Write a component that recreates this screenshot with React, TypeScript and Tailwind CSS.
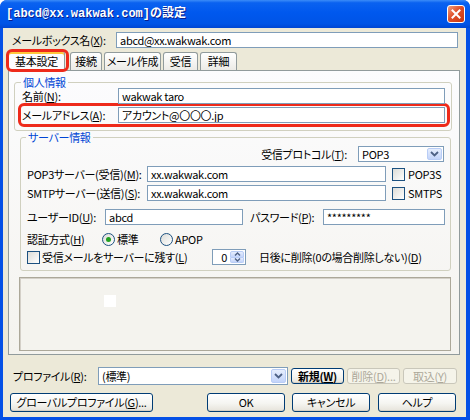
import React from "react";

type P = { children?: React.ReactNode; className?: string };

function Field({ children, className = "" }: P) {
  return (
    <div
      className={`h-[16px] shrink-0 border border-[#7F9DB9] bg-white pl-[3px] leading-[14px] whitespace-nowrap overflow-hidden ${className}`}
    >
      {children}
    </div>
  );
}

function DropArrow() {
  return (
    <div className="w-[15px] self-stretch m-px shrink-0 rounded-[2px] border border-[#B9CDF6] bg-[linear-gradient(to_bottom,#E6EEFD,#C3D4FA)] flex items-center justify-center">
      <svg width="9" height="6" viewBox="0 0 9 6">
        <path d="M1 1 L4.5 4.5 L8 1" fill="none" stroke="#4D6185" strokeWidth="1.8" />
      </svg>
    </div>
  );
}

function Combo({ children, className = "" }: P) {
  return (
    <div className={`flex shrink-0 border border-[#7F9DB9] bg-white ${className}`}>
      <span className="flex-1 flex items-center pl-[3px] whitespace-nowrap overflow-hidden">
        {children}
      </span>
      <DropArrow />
    </div>
  );
}

function Btn({
  children,
  className = "",
  disabled = false,
}: P & { disabled?: boolean }) {
  return (
    <div
      className={`flex shrink-0 items-center justify-center rounded-[3px] border whitespace-nowrap ${
        disabled
          ? "border-[#C9C7BA] bg-[#F5F4EA] text-[#ACA899]"
          : "border-[#003C74] bg-[linear-gradient(to_bottom,#FFFFFF_0%,#F5F5F1_55%,#E6E3DA_100%)] shadow-[inset_0_-1px_0_#D6D0C5]"
      } ${className}`}
    >
      {children}
    </div>
  );
}

function Check() {
  return (
    <div className="w-[13px] h-[13px] shrink-0 border border-[#1C5180] bg-[linear-gradient(135deg,#DCDCD7,#FFFFFF)]" />
  );
}

function Radio({ on = false }: { on?: boolean }) {
  return (
    <div className="w-[13px] h-[13px] shrink-0 rounded-full border border-[#1C5180] bg-[linear-gradient(135deg,#DCDCD7,#FFFFFF)] flex items-center justify-center">
      {on && <div className="w-[5px] h-[5px] rounded-full bg-[#21A121]" />}
    </div>
  );
}

function Tab({ children, className = "" }: P) {
  return (
    <div
      className={`h-[18px] mb-px shrink-0 flex items-center justify-center whitespace-nowrap rounded-t-[3px] border border-b-0 border-[#919B9C] bg-[linear-gradient(to_bottom,#FFFFFF,#ECEBE6)] ${className}`}
    >
      {children}
    </div>
  );
}

export default function App() {
  return (
    <div className="w-[470px] h-[420px] overflow-hidden bg-white font-['Liberation_Sans_Narrow','Noto_Sans_CJK_JP',sans-serif] [font-feature-settings:'palt'] text-[11px] tracking-[-0.3px] text-black">
      <div className="w-[470px] h-[420px] flex flex-col rounded-t-[7px] overflow-hidden bg-[#0450E6]">
        {/* Title bar */}
        <div className="h-[28px] shrink-0 flex items-center pl-[6px] pr-[5px] bg-[linear-gradient(to_bottom,#3B8CF8_0%,#0A62F0_10%,#0058EE_45%,#0054E6_85%,#0046D2_100%)]">
          <span className="font-['Liberation_Mono','Noto_Sans_CJK_JP',monospace] [font-feature-settings:normal] tracking-normal font-bold text-[12px] text-white [text-shadow:1px_1px_0_#0A1E8C]">
            [abcd@xx.wakwak.com]の設定
          </span>
          <div className="ml-auto w-[18px] h-[18px] rounded-[3px] border border-white bg-[linear-gradient(135deg,#F0A080,#E0502A_45%,#C7360F)] flex items-center justify-center">
            <svg width="10" height="10" viewBox="0 0 10 10">
              <path d="M1.5 1.5 L8.5 8.5 M8.5 1.5 L1.5 8.5" stroke="white" strokeWidth="2" strokeLinecap="square" />
            </svg>
          </div>
        </div>

        {/* Body */}
        <div className="flex-1 ml-[3px] mr-[4px] mb-[3px] bg-[#ECE9D8] flex flex-col">
          {/* Mailbox name */}
          <div className="mt-[4px] h-[16px] flex items-center">
            <div className="w-[113px] pl-[9px] whitespace-nowrap">
              メールボックス名(<u>X</u>):
            </div>
            <Field className="w-[342px]">abcd@xx.wakwak.com</Field>
          </div>

          {/* Tabs */}
          <div className="relative z-10 mt-[3px] ml-[5px] h-[20px] flex items-end">
            <div className="h-[20px] w-[57px] shrink-0 flex items-center justify-center rounded-t-[3px] border border-b-0 border-[#919B9C] border-t-[#E68B2C] bg-[#FCFCFE] shadow-[inset_0_2px_0_#FFC73C]">
              基本設定
            </div>
            <Tab className="ml-[5px] w-[32px]">接続</Tab>
            <Tab className="ml-[2px] w-[57px]">メール作成</Tab>
            <Tab className="ml-[2px] w-[35px]">受信</Tab>
            <Tab className="ml-[2px] w-[37px]">詳細</Tab>
            <div className="absolute left-[-2px] top-[-2px] w-[63px] h-[23px] rounded-[6px] border-[3px] border-[#EE2A1B]" />
          </div>

          {/* Tab panel */}
          <div className="mt-[-1px] ml-[5px] w-[452px] h-[285px] shrink-0 border border-[#919B9C] bg-[linear-gradient(to_bottom,#FCFCFE,#F4F3EE)] flex flex-col">
            {/* 個人情報 */}
            <fieldset className="mt-[5px] ml-[5px] w-[438px] border border-[#D0D0BF] rounded-[3px] pb-[3px]">
              <legend className="ml-[6px] px-[2px] leading-[12px] text-[#0046D5]">個人情報</legend>
              <div className="h-[16px] flex items-center">
                <div className="w-[103px] pl-[7px] whitespace-nowrap">名前(<u>N</u>):</div>
                <Field className="w-[327px]">wakwak taro</Field>
              </div>
              <div className="mt-[-1px] ml-[3px] w-[432px] rounded-[6px] border-[3px] border-[#EE2A1B] py-px">
                <div className="h-[16px] flex items-center">
                  <div className="w-[97px] pl-[1px] whitespace-nowrap">メールアドレス(<u>A</u>):</div>
                  <Field className="w-[327px]">アカウント@〇〇〇.jp</Field>
                </div>
              </div>
            </fieldset>

            {/* サーバー情報 */}
            <fieldset className="ml-[11px] w-[431px] border border-[#D0D0BF] rounded-[3px] pb-[5px]">
              <legend className="ml-[5px] px-[2px] leading-[12px] text-[#0046D5]">サーバー情報</legend>
              <div className="mt-[3px] h-[16px] flex items-center justify-end pr-[6px]">
                <span className="mr-[11px] whitespace-nowrap">受信プロトコル(<u>T</u>):</span>
                <Combo className="w-[86px] h-[16px] leading-[14px]">POP3</Combo>
              </div>
              <div className="mt-[4px] h-[16px] flex items-center">
                <div className="w-[126px] pl-[6px] whitespace-nowrap">POP3サーバー(受信)(<u>M</u>):</div>
                <Field className="w-[239px]">xx.wakwak.com</Field>
                <div className="ml-[6px]"><Check /></div>
                <span className="ml-[3px]">POP3S</span>
              </div>
              <div className="mt-[3px] h-[16px] flex items-center">
                <div className="w-[126px] pl-[6px] whitespace-nowrap">SMTPサーバー(送信)(<u>S</u>):</div>
                <Field className="w-[239px]">xx.wakwak.com</Field>
                <div className="ml-[6px]"><Check /></div>
                <span className="ml-[3px]">SMTPS</span>
              </div>
              <div className="mt-[8px] h-[16px] flex items-center">
                <div className="w-[84px] pl-[6px] whitespace-nowrap">ユーザーID(<u>U</u>):</div>
                <Field className="w-[138px]">abcd</Field>
                <div className="ml-[7px] w-[73px] whitespace-nowrap">パスワード(<u>P</u>):</div>
                <Field className="w-[122px]">*********</Field>
              </div>
              <div className="mt-[6px] h-[16px] flex items-center">
                <div className="w-[81px] pl-[6px] whitespace-nowrap">認証方式(<u>H</u>)</div>
                <Radio on />
                <span className="ml-[2px] w-[43px]">標準</span>
                <Radio />
                <span className="ml-[2px]">APOP</span>
              </div>
              <div className="mt-[2px] h-[16px] flex items-center">
                <div className="pl-[6px]"><Check /></div>
                <span className="ml-[2px] w-[170px] whitespace-nowrap">
                  受信メールをサーバーに残す(<u>L</u>)
                </span>
                <div className="w-[34px] h-[16px] shrink-0 flex border border-[#7F9DB9] bg-white">
                  <span className="flex-1 text-right pr-[2px] leading-[14px]">0</span>
                  <div className="w-[14px] flex flex-col m-px">
                    <div className="flex-1 rounded-t-[2px] border border-[#B9CDF6] bg-[linear-gradient(to_bottom,#E6EEFD,#C3D4FA)] flex items-center justify-center">
                      <svg width="7" height="4" viewBox="0 0 7 4"><path d="M1 3.5 L3.5 1 L6 3.5" fill="none" stroke="#4D6185" strokeWidth="1.4" /></svg>
                    </div>
                    <div className="flex-1 rounded-b-[2px] border border-t-0 border-[#B9CDF6] bg-[linear-gradient(to_bottom,#E6EEFD,#C3D4FA)] flex items-center justify-center">
                      <svg width="7" height="4" viewBox="0 0 7 4"><path d="M1 0.5 L3.5 3 L6 0.5" fill="none" stroke="#4D6185" strokeWidth="1.4" /></svg>
                    </div>
                  </div>
                </div>
                <span className="ml-[13px] whitespace-nowrap">
                  日後に削除(0の場合削除しない)(<u>D</u>)
                </span>
              </div>
            </fieldset>

            {/* Sunken area */}
            <div className="mt-[6px] ml-[10px] w-[432px] h-[74px] border border-[#ACA899] shadow-[inset_1px_1px_0_#D4D0C8] bg-[#F4F3EE] pt-[17px] pl-[84px]">
              <div className="w-[12px] h-[12px] bg-white" />
            </div>
          </div>

          {/* Profile row */}
          <div className="mt-[12px] h-[18px] flex items-center">
            <div className="w-[95px] pl-[10px] whitespace-nowrap">プロファイル(<u>R</u>):</div>
            <Combo className="w-[190px] h-[18px]">(標準)</Combo>
            <Btn className="ml-[3px] w-[53px] h-[16px] font-bold">新規(<u>W</u>)</Btn>
            <Btn disabled className="ml-[3px] w-[53px] h-[16px]">削除(<u>D</u>)...</Btn>
            <Btn disabled className="ml-[3px] w-[54px] h-[16px]">取込(<u>Y</u>)</Btn>
          </div>

          {/* Buttons row */}
          <div className="mt-[8px] h-[19px] flex items-center">
            <Btn className="ml-[7px] w-[143px] h-[19px]">グローバルプロファイル(<u>G</u>)...</Btn>
            <Btn className="ml-[54px] w-[78px] h-[19px]">OK</Btn>
            <Btn className="ml-[7px] w-[78px] h-[19px]">キャンセル</Btn>
            <Btn className="ml-[8px] w-[78px] h-[19px]">ヘルプ</Btn>
          </div>
        </div>
      </div>
    </div>
  );
}
